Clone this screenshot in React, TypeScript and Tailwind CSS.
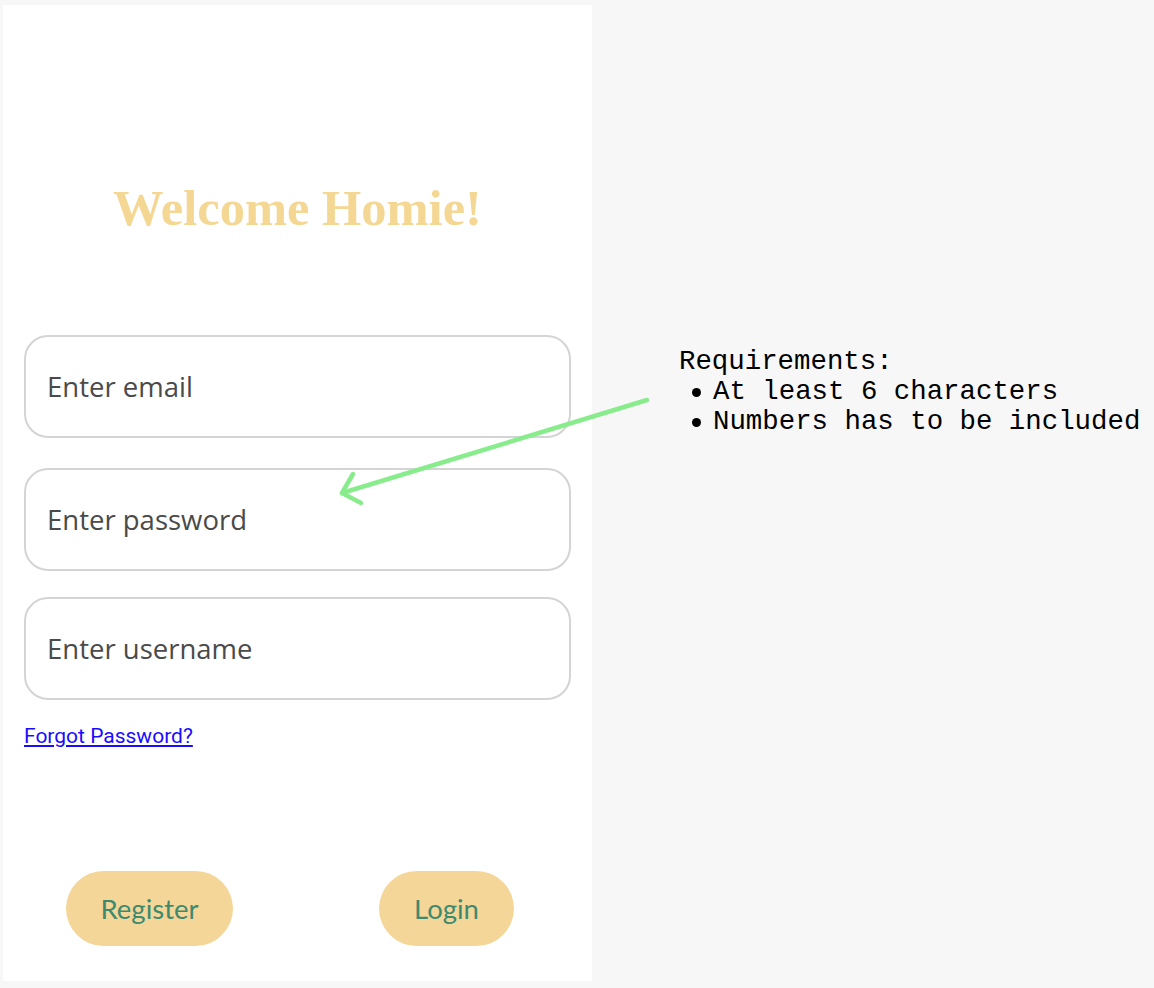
import React from "react";

const inputs = ["Enter email", "Enter password", "Enter username"];
const rules = ["At least 6 characters", "Numbers has to be included"];

export default function App() {
  return (
    <div className="relative w-full h-[988px] bg-[#f7f7f7] flex overflow-hidden">
      <div className="ml-[3px] mt-[5px] w-[589px] h-[976px] bg-white flex flex-col">
        <h1
          className="mt-[173px] h-[60px] leading-[60px] text-center text-[50.5px] font-bold text-[#f5d794]"
          style={{ fontFamily: '"Liberation Serif", serif' }}
        >
          Welcome Homie!
        </h1>

        <div
          className="mt-[97px] px-[21px] flex flex-col"
          style={{ fontFamily: '"Open Sans", sans-serif' }}
        >
          {inputs.map((p, i) => (
            <input
              key={p}
              placeholder={p}
              className={`${i === 0 ? "" : i === 1 ? "mt-[30px]" : "mt-[26px]"} w-full h-[103px] rounded-[24px] border-2 border-[#d4d4d4] bg-white pl-[21px] text-[27.5px] outline-none placeholder:text-[#4a4a4a]`}
            />
          ))}
        </div>

        <a
          href="#"
          className="mt-[24px] ml-[21px] w-fit text-[21px] leading-[24px] text-[#1a0dff] underline"
          style={{ fontFamily: "Roboto, sans-serif" }}
        >
          Forgot Password?
        </a>

        <div
          className="mt-[123px] pl-[63px] pr-[78px] flex justify-between"
          style={{ fontFamily: "Lato, sans-serif" }}
        >
          <button className="w-[167px] h-[75px] rounded-full bg-[#f4d699] text-[27.5px] text-[#3d8a6e]">
            Register
          </button>
          <button className="w-[135px] h-[75px] rounded-full bg-[#f4d699] text-[27.5px] text-[#3d8a6e]">
            Login
          </button>
        </div>
      </div>

      <div
        className="ml-[87px] mt-[347px] text-[27.4px] leading-[30px] text-black"
        style={{ fontFamily: '"Liberation Mono", monospace' }}
      >
        <div>Requirements:</div>
        <ul>
          {rules.map((r) => (
            <li key={r} className="flex items-center">
              <span className="ml-[13px] mr-[12px] w-[9px] h-[9px] rounded-full bg-black" />
              <span>{r}</span>
            </li>
          ))}
        </ul>
      </div>

      <svg
        className="absolute left-0 top-0 pointer-events-none"
        width="1154"
        height="988"
        viewBox="0 0 1154 988"
      >
        <g stroke="#88ec8d" strokeWidth="4.5" fill="none" strokeLinecap="round" strokeLinejoin="round">
          <path d="M647 400 L342 493" />
          <path d="M353 474 L342 493 L361 503" />
        </g>
      </svg>
    </div>
  );
}
